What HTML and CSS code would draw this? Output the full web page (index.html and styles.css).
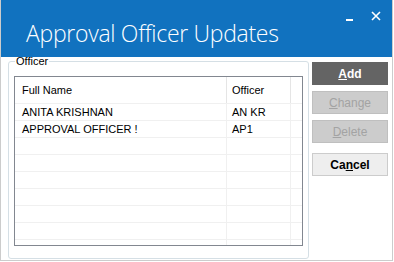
FILE: index.html
```html
<!DOCTYPE html>
<html lang="en">
<head>
    <meta charset="UTF-8">
    <title>Approval Officer Updates</title>
    <link rel="stylesheet" href="styles.css">
</head>
<body>
    <div class="win">
        <!-- title bar -->
        <header class="tbar">
            <h1 class="ttl">Approval Officer Updates</h1>
            <div class="ctl">
                <span class="min"></span>
                <svg class="cls" width="10" height="10" viewBox="0 0 10 10">
                    <path d="M1 1L9 9M9 1L1 9" stroke="#fff" stroke-width="1.6"/>
                </svg>
            </div>
        </header>

        <!-- body -->
        <main class="cnt">
            <fieldset class="grp">
                <legend>Officer</legend>
                <div class="lv">
                    <table>
                        <thead>
                            <tr><th class="c1">Full Name</th><th class="c2">Officer</th><th class="c3"></th></tr>
                        </thead>
                        <tbody>
                            <tr><td>ANITA KRISHNAN</td><td>AN KR</td><td></td></tr>
                            <tr><td>APPROVAL OFFICER !</td><td>AP1</td><td></td></tr>
                            <tr><td></td><td></td><td></td></tr>
                            <tr><td></td><td></td><td></td></tr>
                            <tr><td></td><td></td><td></td></tr>
                            <tr><td></td><td></td><td></td></tr>
                            <tr><td></td><td></td><td></td></tr>
                            <tr><td></td><td></td><td></td></tr>
                            <tr><td></td><td></td><td></td></tr>
                        </tbody>
                    </table>
                </div>
            </fieldset>

            <div class="btns">
                <button class="btn add"><u>A</u>dd</button>
                <button class="btn off"><u>C</u>hange</button>
                <button class="btn off"><u>D</u>elete</button>
                <button class="btn cancel">Ca<u>n</u>cel</button>
            </div>
        </main>
    </div>
</body>
</html>
```

FILE: styles.css
```css
html,
body {
    margin: 0;
    padding: 0;
    background: #fff;
}

body {
    font-family: "Liberation Sans", Arial, sans-serif;
    font-size: 11px;
    color: #000;
}

/* window frame */
.win {
    width: 393px;
    height: 261px;
    box-sizing: border-box;
    border: 1px solid #cccccc;
    border-top: 0;
    display: flex;
    flex-direction: column;
    overflow: hidden;
}

/* 1. title bar */
.tbar {
    height: 57px;
    margin: 0 -1px;
    background: #1172bf;
    display: flex;
    justify-content: space-between;
    flex-shrink: 0;
}

.ttl {
    margin: 0;
    padding: 18px 0 0 26px;
    font-family: "Open Sans", sans-serif;
    font-weight: 300;
    font-size: 23px;
    line-height: 30px;
    color: #fff;
    letter-spacing: -0.3px;
}

.ctl {
    display: flex;
    align-items: flex-start;
    gap: 18px;
    padding: 11px 12px 0 0;
}

.min {
    display: block;
    width: 7px;
    height: 2px;
    margin-top: 8px;
    background: #fff;
}

.cls {
    display: block;
}

/* 2. content */
.cnt {
    flex: 1;
    display: flex;
    gap: 3px;
    padding: 0 0 0 7px;
}

.grp {
    width: 301px;
    height: 204px;
    box-sizing: border-box;
    margin: -2px 0 0 0;
    padding: 9px 5px 0 5px;
    border: 1px solid #d5dfe5;
    border-radius: 3px;
}

.grp legend {
    margin-left: 1px;
    padding: 0 1px;
    line-height: 12px;
}

/* list view */
.lv {
    height: 170px;
    box-sizing: border-box;
    border: 1px solid #828790;
    overflow: hidden;
}

.lv table {
    width: 100%;
    border-collapse: collapse;
    table-layout: fixed;
}

.lv th {
    height: 26px;
    padding: 0 0 0 7px;
    font-weight: normal;
    text-align: left;
    border-right: 1px solid #e5e5e5;
    border-bottom: 1px solid #f0f0f0;
}

.lv .c1 { width: 204px; }
.lv .c2 { width: 58px; padding-left: 5px; }
.lv .c3 { border-right: 0; }

.lv td {
    height: 16px;
    padding: 0 0 0 7px;
    border-right: 1px solid #f0f0f0;
    border-bottom: 1px solid #f0f0f0;
    white-space: nowrap;
}

.lv td:nth-child(2) { padding-left: 5px; }
.lv td:last-child { border-right: 0; }

/* buttons */
.btns {
    display: flex;
    flex-direction: column;
    padding-top: 5px;
}

.btn {
    width: 76px;
    height: 23px;
    margin-bottom: 6px;
    font-family: "Liberation Sans", Arial, sans-serif;
    font-size: 12px;
    font-weight: bold;
    border: 1px solid #bfbfbf;
    padding: 0;
}

.add {
    background: #646464;
    border-color: #646464;
    color: #fff;
}

.off {
    background: #cccccc;
    color: #a3a3a3;
    font-weight: normal;
}

.cancel {
    margin-top: 4px;
    background: #eeeeee;
    border-color: #cccccc;
    color: #000;
}
```
